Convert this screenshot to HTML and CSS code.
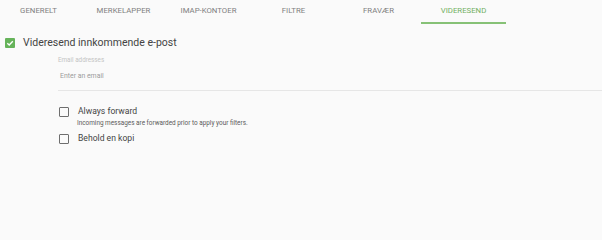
FILE: index.html
```html
<!DOCTYPE html>
<html lang="no">
<head>
<meta charset="utf-8">
<title>Videresend</title>
<link rel="stylesheet" href="styles.css">
</head>
<body>
<nav class="tabs">
  <div class="tab">Generelt</div>
  <div class="tab">Merkelapper</div>
  <div class="tab">IMAP-kontoer</div>
  <div class="tab">Filtre</div>
  <div class="tab">Fravær</div>
  <div class="tab active">Videresend</div>
</nav>
<main class="content">
  <div class="main-toggle">
    <span class="cb cb-on">
      <svg viewBox="0 0 10 10" width="10" height="10"><path d="M2.3 5.2 L4.2 7 L7.8 3.2" fill="none" stroke="#fff" stroke-width="1.3"/></svg>
    </span>
    <span class="main-label">Videresend innkommende e-post</span>
  </div>
  <div class="email-field">
    <div class="field-label">Email addresses</div>
    <div class="field-input">Enter an email</div>
  </div>
  <div class="options">
    <div class="option">
      <span class="cb"></span>
      <span class="opt-label">Always forward</span>
    </div>
    <div class="opt-desc">Incoming messages are forwarded prior to apply your filters.</div>
    <div class="option option-2">
      <span class="cb"></span>
      <span class="opt-label">Behold en kopi</span>
    </div>
  </div>
</main>
</body>
</html>
```
FILE: styles.css
```css
html, body {
  margin: 0;
  padding: 0;
}
body {
  background: #fafafa;
  font-family: Roboto, "Liberation Sans", Arial, sans-serif;
  color: #3a3a3a;
  width: 602px;
  height: 240px;
  overflow: hidden;
}
.tabs {
  display: flex;
  margin-left: -4px;
  height: 24px;
}
.tab {
  width: 85px;
  flex: none;
  box-sizing: border-box;
  height: 24px;
  padding-top: 6px;
  text-align: center;
  text-transform: uppercase;
  font-size: 7.8px;
  line-height: 9px;
  color: #808080;
}
.tab.active {
  color: #72b062;
  border-bottom: 2px solid #86c176;
}
.content {
  display: flex;
  flex-direction: column;
}
.main-toggle {
  display: flex;
  align-items: center;
  gap: 8px;
  margin-top: 14px;
  padding-left: 5px;
  height: 10px;
}
.cb {
  width: 10px;
  height: 10px;
  box-sizing: border-box;
  border: 1.3px solid #6e6e6e;
  border-radius: 1px;
  flex: none;
  display: flex;
}
.cb-on {
  border: none;
  background: #66b35a;
}
.main-label {
  font-size: 10.5px;
  line-height: 12px;
  color: #444;
}
.email-field {
  margin-left: 58px;
  margin-top: 8px;
  padding-bottom: 9px;
  border-bottom: 1px solid #e6e6e6;
}
.field-label {
  font-size: 6.3px;
  line-height: 8px;
  color: #c4c4c4;
}
.field-input {
  margin-top: 8px;
  padding-left: 2px;
  font-size: 6.9px;
  line-height: 9px;
  color: #9c9c9c;
}
.options {
  margin-left: 59px;
  margin-top: 16px;
  display: flex;
  flex-direction: column;
}
.option {
  display: flex;
  align-items: center;
  gap: 9px;
  height: 10px;
}
.opt-label {
  font-size: 8.6px;
  line-height: 11px;
  color: #444;
  margin-top: -1px;
}
.opt-desc {
  margin-left: 18px;
  margin-top: 2px;
  font-size: 6.4px;
  line-height: 8px;
  color: #5a5a5a;
}
.option-2 {
  margin-top: 7px;
}
```
